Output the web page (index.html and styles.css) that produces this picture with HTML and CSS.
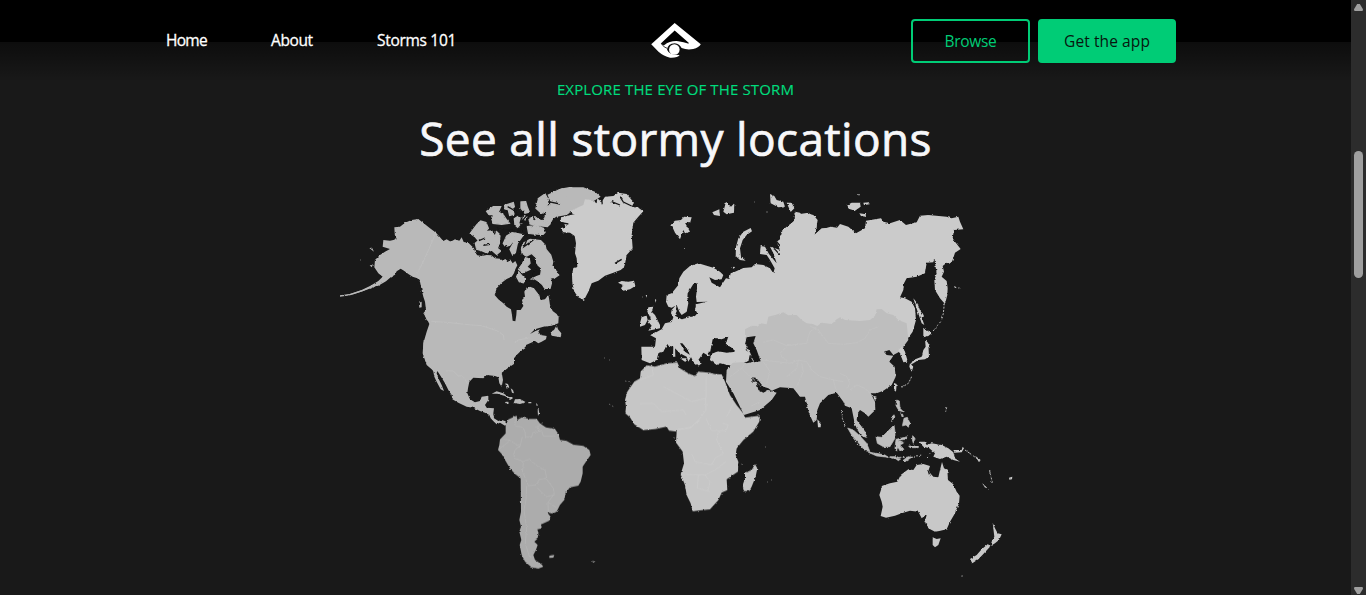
FILE: index.html
```html
<!DOCTYPE html>
<html lang="en">
<head>
<meta charset="utf-8">
<title>Stormy locations</title>
<link rel="stylesheet" href="styles.css">
</head>
<body>
<div class="page">
<header class="header">
  <nav class="nav"><a class="home">Home</a><a class="about">About</a><a class="storms">Storms 101</a></nav>
  <svg class="logo" viewBox="60 34 156 112" aria-label="Logo">
    <path fill="#fff" fill-rule="evenodd" d="M134 37L213 101Q208 110 190 116Q172 120 155 113Q149 100 134 98Q113 98 111 118Q116 134 149 134Q143 143 120 142Q101 138 85 124L63 101ZM134 60L92 99Q98 105 102 104Q120 90 145 92Q162 94 174 99L178 98Z"/>
    <path fill="none" stroke="#0c0c0c" stroke-width="2.5" d="M94 100Q102 112 112 114"/>
    <circle cx="133" cy="117" r="16" fill="#fff"/>
  </svg>
  <div class="actions"><a class="btn browse"><span>Browse</span></a><a class="btn app"><span>Get the app</span></a></div>
</header>
<main class="section">
  <p class="eyebrow"><span>EXPLORE THE EYE OF THE STORM</span></p>
  <h1 class="title"><span>See all stormy locations</span></h1>
  <svg class="map" viewBox="325 180 701 404" role="img" aria-label="World map">
    <defs><filter id="coast" x="0" y="0" width="100%" height="100%"><feTurbulence type="fractalNoise" baseFrequency=".32" numOctaves="2" seed="4"/><feDisplacementMap in="SourceGraphic" scale="2.4" xChannelSelector="R" yChannelSelector="G"/></filter></defs>
    <g filter="url(#coast)">
    <!-- North America -->
    <g class="north" transform="translate(330 180) scale(.33333)">
      <path d="M265 117L275 125 285 133 300 145 318 158 330 172 340 183 350 178 362 185 375 178 388 182 395 172 402 188 412 185 425 198 432 205 436 218 442 226 455 228 470 225 484 226 495 235 510 236 520 243 525 236 535 245 540 238 548 250 556 243 562 256 556 268 552 280 545 290 530 297 515 308 500 325 494 345 505 358 520 370 530 380 543 388 546 405 548 422 556 424 559 405 560 390 572 390 580 378 576 360 585 350 583 335 590 322 600 320 612 325 620 335 628 345 632 360 645 358 655 345 657 355 660 375 668 393 680 402 686 412 685 430 665 437 640 440 615 448 600 462 615 454 630 448 625 455 632 465 650 468 648 478 635 485 625 490 615 483 600 490 588 495 586 505 570 515 560 525 552 535 552 552 535 563 515 578 500 582 310 572 290 555 278 520 280 490 290 455 298 432 290 415 280 400 288 390 285 365 280 350 275 330 270 305 262 295 248 290 235 282 222 272 212 266 200 274 195 284 182 292 168 304 145 317 130 322 100 333 70 343 35 348 60 342 95 330 120 318 145 303 158 290 145 280 133 262 135 240 150 225 165 215 180 207 158 200 160 180 180 182 200 178 194 160 193 142 210 140 225 128 245 120Z"/>
      <path class="aleutians" d="M30 348L60 344 95 333 125 320"/>
      <!-- Arctic islands and Newfoundland -->
      <path class="arctic" d="M421 160L440 135 452 123 468 128 475 145 465 155 485 153 495 170 500 155 510 165 508 190 502 205 512 213 500 223 485 210 470 218 455 212 440 208 436 190 445 182 435 170ZM470 94L490 80 512 80 505 96 520 105 530 120 538 130 515 133 490 130 485 115 492 104 477 104ZM524 76L550 68 553 80 540 90 525 87ZM573 66L587 65 592 82 598 96 585 100 573 85ZM535 90L548 88 552 103 539 106ZM553 115L562 108 572 115 573 130 563 142 555 135ZM580 106L590 110 588 120 579 118ZM530 168L546 158 558 160 550 182 540 195 527 200 520 190ZM560 160L580 165 562 190 556 218 548 225 540 208 550 190ZM592 140L615 137 640 145 645 157 635 167 610 163 596 160ZM597 116L615 110 627 120 645 125 660 132 652 140 620 136 600 132ZM618 85L626 55 645 42 655 60 648 90 635 100ZM655 45L690 28 725 22 720 90 690 100 668 115 660 130 640 120 650 105 645 90 665 68ZM572 205L580 190 600 178 632 182 645 195 648 208 662 225 668 245 665 260 680 275 686 285 672 295 662 290 664 310 660 325 645 325 635 312 620 300 605 297 620 290 632 285 635 265 620 252 620 235 605 220 590 228 577 222ZM560 290L566 276 578 290 586 298 580 308 568 305ZM575 255L587 233 598 238 600 250 590 260 600 268 578 278 566 268Z"/>
      <path d="M665 467L662 455 672 450 680 435 684 448 694 460 692 472ZM118 204L126 203 132 215ZM119 256L128 255 125 262ZM267 368L275 365 275 382 268 383ZM284 405L300 415 304 430 290 420Z"/>
      <path d="M720 22L760 22 795 35 812 50 785 67 760 80 735 88 710 105 680 110 700 70Z"/>
      <path class="water" d="M533 80L560 95 552 112 580 95 570 130 592 105M500 145L530 148 560 150 595 165 645 168M530 195L515 215M578 185L570 205 572 225M447 182L465 174M460 196L480 193M600 95L615 120M655 65L690 72M590 180L582 200 610 180M608 297L620 305 635 318 640 335M597 300L603 315 590 325M600 230L620 255 605 285"/>
      <path class="border" d="M318 158L300 200 275 255 260 282M304 424L350 427 425 435 455 437 500 452 520 465 524 492 540 494 565 480 598 474"/>
    </g>
    <g transform="translate(420 340) scale(.33333)">
      <path class="north" d="M11 0H285L275 72 245 97 249 120 245 140 238 130 235 112 225 108 200 105 190 115 160 113 148 125 144 145 142 160 150 178 165 187 180 183 185 170 205 167 205 180 195 195 200 203 222 205 220 220 222 235 235 243 245 240 255 243 263 250 255 257 240 248 230 253 222 245 212 235 208 225 195 218 180 213 160 203 140 200 115 188 97 178 95 165 85 150 75 130 60 105 52 93 50 100 55 115 65 135 72 153 62 148 50 125 43 110 40 95 32 75 18 65 10 40 10 20ZM215 161L230 154 250 160 265 170 279 175 270 180 255 168 232 161ZM285 178L300 177 318 187 300 192 281 189ZM255 186L265 185 266 190 257 190ZM325 186L334 186 334 190 325 190ZM256 130L264 132 268 142 260 146ZM272 145L279 150 282 160 276 158ZM348 188L354 196 350 198ZM355 203L358 220 354 228 353 212Z"/>
      <path class="border" d="M78 93H100L115 108 128 108 143 132"/>
      <path class="south" d="M265 238L290 227 292 240 305 232 330 237 350 237 360 250 378 262 405 267 415 282 420 300 440 303 460 314 490 318 508 330 512 345 500 362 488 380 488 400 482 425 475 437 450 442 437 458 433 480 420 495 410 515 400 520 382 518 392 530 388 542 370 550 363 553 365 565 352 568 356 580 352 597 343 605 353 615 347 632 340 645 345 660 365 673 370 680 355 686 335 682 315 665 305 645 299 615 304 600 298 575 303 560 298 540 303 515 302 415 285 402 270 385 255 360 245 342 234 330 238 315 240 298 257 280 257 255ZM388 647L403 645 400 653 388 654ZM517 662L524 666 519 668Z"/>
      <path class="border south-border" d="M290 235Q278 255 290 259Q318 257 316 290L335 291 338 278 365 272 370 288 407 288M365 250L350 260 358 275M307 290L300 320 268 300 250 298M270 302L240 325M300 320Q278 324 283 355L305 362 310 370 307 400M308 365L328 358 355 380 375 390 380 415 358 418 348 435 325 437 310 400M320 437L318 480 312 510 320 565 316 610 330 655M378 415L400 445 403 465 378 470 352 443M400 465L384 487 385 515M385 487L410 503"/>
    </g>
    <!-- Greenland and Iceland -->
    <g class="pale" transform="translate(460 180) scale(.33333)">
      <path d="M303 112L320 108 345 102 330 94 350 84 370 75 375 58 395 60 410 70 412 55 425 66 435 50 460 48 475 38 500 42 522 68 515 80 535 83 550 94 535 110 520 128 515 165 518 205 500 225 495 252 490 267 460 278 435 287 415 302 395 310 385 335 372 360 355 352 343 335 337 310 336 285 340 264 352 260 350 235 345 220 348 190 344 168 330 158 310 157 302 145 316 140 312 128 302 125Z"/>
      <path d="M474 308L485 303 505 305 522 302 526 318 510 328 490 332 483 325 490 316Z"/>
      <path class="water" d="M303 128L325 132M424 52L427 73M480 50L490 66 515 78M455 65L480 75M465 250L485 238M341 240L350 252"/>
    </g>
    <!-- Europe, Russia -->
    <g class="pale" transform="translate(620 180) scale(.33333)">
      <path d="M105 500L108 475 90 465 103 460 125 448 135 430 155 425 160 412 153 400 155 390 168 375 170 393 165 407 185 418 208 412 225 408 232 400 225 388 228 373 260 365 230 366 228 350 233 310 220 312 203 340 202 355 205 370 200 395 185 405 178 395 170 375 155 383 145 380 138 365 140 345 155 340 175 315 178 295 190 275 210 258 235 250 255 256 280 263 300 275 310 285 305 298 285 300 268 292 275 308 300 322 318 295 328 297 332 280 345 275 370 264 395 262 405 252 430 255 450 265 460 280 464 265 450 240 440 225 420 222 422 198 435 200 447 222 470 250 460 220 450 200 465 205 480 210 470 185 490 170 482 155 500 140 520 125 530 110 525 95 540 98 550 110 560 100 580 105 593 120 588 150 583 165 600 150 632 140 661 145V450L600 460 560 450 530 440 490 440 445 450 395 455 375 452 395 475 350 560 300 550 290 555 270 540 275 522 293 514 320 515 345 515 330 500 315 495 325 470 305 478 285 475 275 500 278 515 265 515 270 530 250 518 235 540 245 550 235 558 220 545 200 505 187 490 180 490 195 515 215 528 205 545 200 530 180 520 160 500 140 496 130 515 115 520 110 540 90 550 65 540 64 500Z"/>
      <path d="M85 382L100 380 95 395 105 405 120 435 120 445 85 452 95 437 85 425 92 415 82 395ZM60 430L65 410 80 407 83 420 75 435 60 440ZM153 132L165 122 183 120 192 110 215 112 210 130 195 128 210 155 195 160 190 150 180 178 165 158ZM277 97L298 88 300 108 282 105ZM310 95L318 65 333 80 343 70 342 98 320 103ZM348 200L355 175 370 155 392 144 396 154 380 165 368 180 360 205 363 230 377 242 360 240 347 228ZM450 42L463 48 470 60 490 65 495 80 475 82 452 70ZM500 68L515 68 523 85 512 96ZM333 262L343 260 345 268ZM160 500L165 500 166 530 159 530ZM180 535L200 535 195 545ZM105 357L109 360 106 368ZM77 345L81 345 80 353ZM192 204L196 204 195 208Z"/>
      <path class="water" d="M470 185L490 210 510 232M462 205L485 230"/>
    </g>
    <g class="pale" transform="translate(780 180) scale(.33333)">
      <path d="M0 168L20 145 45 120 43 95 60 102 85 98 108 115 110 140 103 165 125 145 150 143 170 145 180 132 205 140 228 160 255 145 258 122 285 118 303 115 310 125 330 130 360 120 378 135 410 127 420 107 445 105 500 110 515 115 535 110 540 125 550 148 522 150 518 175 525 185 542 207 525 218 518 240 512 252 500 248 488 258 492 275 485 290 500 303 503 325 502 345 495 372 480 355 465 330 463 300 470 280 465 250 463 232 460 247 440 248 435 280 410 290 380 295 372 310 370 330 360 352 375 355 395 365 405 385 408 420 398 455 385 473 340 470 300 460 280 450 240 450 180 450 150 450 110 450 60 450 0 450Z"/>
      <path d="M202 75L215 68 240 68 242 80 225 92 206 86ZM250 68L268 67 269 73 252 75ZM238 100L258 103 257 110 243 108ZM0 60L12 75 10 84 0 78ZM22 68L43 80 33 94ZM400 355L412 370 420 390 432 410 425 412 433 435 425 430 413 395ZM430 445L455 460 445 468 430 472ZM435 478L445 490 447 530 435 538 415 540 400 550 390 555 400 540 425 530 430 510 437 500ZM390 550L400 560 395 575 388 560ZM522 318L530 322 525 325ZM535 322L542 325 536 326ZM234 43L240 43 237 47Z"/>
      <path class="islands" d="M493 370L490 400 485 420M482 425L472 437 458 455"/>
    </g>
    <!-- Africa -->
    <g class="africa" transform="translate(600 340) scale(.33333)">
      <path d="M140 76L165 80 200 70 232 67 240 85 265 100 285 108 295 95 325 98 345 102 365 103 375 125 390 165 410 195 430 220 435 233 480 227 478 245 460 275 430 300 410 325 407 345 415 365 414 395 380 418 382 450 365 458 355 480 330 508 300 511 278 514 272 490 260 465 255 435 242 403 252 370 248 335 228 308 230 275 207 272 200 260 165 267 130 270 103 253 90 232 76 220 78 200 75 180 82 155 103 125 120 115 122 95ZM465 372L472 385 467 410 455 440 448 453 432 453 428 435 435 415 435 398 455 390Z"/>
      <path class="border" d="M155 75L160 105 120 120M190 140L275 185 318 175 318 110M317 175L318 210 300 235 270 265 230 267M318 235L335 272 378 272 385 255 368 250M380 230L400 190M120 190H160L185 215 250 210 258 225M235 270L275 260 300 240M275 340L285 365 335 375 345 355 370 340 350 300 355 275M245 403L315 405 345 390 378 365M315 405L330 425 325 450M295 405L292 445 330 455"/>
    </g>
    <!-- Asia -->
    <g class="asia" transform="translate(620 180) scale(.33333)">
      <path d="M375 448L395 437 410 438 422 430 440 433 445 410 468 404 490 397 505 406 530 405 545 420 560 430 578 432 592 438 605 428 635 432 650 418 661 412 675 420 720 423 750 420 765 407 770 388 785 387 800 400 820 405 835 420 860 430 865 480 850 500 857 530 862 545 850 547 838 515 820 525 808 510 792 515 800 525 820 527 808 545 824 560 827 590 815 615 790 632 770 640 752 640 765 665 766 690 745 710 735 700 720 690 713 700 710 720 728 745 741 768 733 770 705 735 695 685 675 677 670 665 650 638 625 645 600 670 592 690 590 720 580 728 567 700 555 650 540 650 520 625 480 622 455 632 445 625 430 620 412 598 400 595 410 610 415 630 430 638 445 630 470 638 455 660 420 690 372 705 360 680 340 640 318 605 320 570 340 545 370 545 380 550 400 545 380 510 375 485Z"/>
      <path class="pale" d="M270 540L275 522 300 515 345 515 370 505 390 520 385 545 340 548 325 555 300 548Z"/>
      <path class="water-fill" d="M380 472L407 468 400 490 410 510 422 544 402 547 390 517 375 490ZM397 592L407 593 408 605 397 605ZM270 518L278 478 292 475 303 484 322 478 316 494 333 502 348 515 320 518 295 514Z"/>
      <path class="border" d="M570 438L595 450 625 490 670 493 710 488 735 475 750 450 775 440M590 440L570 455 565 470 560 490 500 497 460 480 430 487M425 540L470 545 510 550 535 540 560 545 575 570 600 590 640 600 670 605M430 545L450 575 440 610M500 500L480 520 500 545M535 540L530 565 500 590M545 550L550 575 530 620M640 600L648 630M660 580L680 590 690 610 680 625M690 630L710 615 735 625 765 655M330 590L365 565 375 550M365 565L390 590 425 620M390 680L420 665"/>
      <path class="pale" d="M845 500L855 515 862 540 852 545 835 510ZM822 609L830 612 828 635 822 630ZM760 647L770 650 765 663ZM592 718L603 730 602 742 594 742Z"/>
    </g>
    <!-- Oceania -->
    <g class="oceania" transform="translate(780 340) scale(.33333)">
      <path d="M302 528L308 500 305 485 298 465 307 437 330 430 352 425 362 405 385 388 400 390 410 375 430 372 450 378 445 393 460 410 475 412 480 390 486 366 492 385 502 390 504 420 520 433 530 455 539 467 537 490 525 520 510 545 500 568 478 573 465 575 445 565 440 550 432 545 438 525 425 535 415 515 390 512 365 520 345 527 318 533ZM458 592L470 597 482 595 475 615 465 622 458 615ZM638 548L645 565 653 580 665 583 657 600 645 610 632 618 635 605 643 590ZM624 612L630 620 610 642 595 658 577 670 570 657 590 645 605 628Z"/>
      <path class="asia isles" d="M203 264L220 270 240 288 260 310 270 335 255 332 235 308 215 285ZM223 240L235 250 255 275 258 292 245 287 232 268ZM265 337L290 340 315 345 325 352 290 348ZM330 350L350 350 360 354 335 355ZM288 290L305 292 325 272 342 255 345 275 345 295 330 320 310 320 292 310ZM350 180L358 183 360 205 370 215 357 212 348 197ZM372 235L382 232 390 250 385 262 378 255 367 258ZM340 225L345 228 335 245ZM362 218L370 225 366 230ZM348 298L382 290 375 298 353 302 370 310 360 315 372 328 360 333 352 318 350 335 345 325ZM398 287L405 295 400 310 397 300ZM345 355L362 357 355 362ZM370 360L385 350 395 352 375 365ZM386 318L415 318 415 323 390 323Z"/>
      <path d="M418 305L435 305 440 315 455 310 485 315 505 325 520 337 525 355 540 365 520 360 500 350 480 357 460 350 465 340 448 325 430 320ZM520 330L545 330 548 320 552 325 545 337 525 338ZM560 332L578 345 572 343ZM585 347L602 360 597 367ZM610 433L622 445 614 442ZM628 395L634 412 630 402ZM687 413L697 410 696 418 688 419ZM545 706L548 708 545 711Z"/>
      <path class="islands" d="M187 213V235L195 258M215 285L235 318M270 338L325 352 390 352 425 345M395 110L385 130 365 142M500 202L497 215M450 340L440 353M555 330L600 362M629 393L637 428M608 432L625 448"/>
      <path class="water" d="M438 525L432 545M445 393L450 408"/>
    </g>
    <g class="dots"><path d="M604 358h1M609 360h1M625 381l6 1M609 404l5 3M642 297h1M674 438h1M738 463l6 2M767 482h1M771 480h1M360 261h1M765 447h1M754 202h1M766 212h1M962 576h1"/></g>
    </g>
  </svg>
</main>
</div>
<aside class="scrollbar"><i class="arrow up"></i><i class="thumb"></i><i class="arrow down"></i></aside>
</body>
</html>
```

FILE: styles.css
```css
* { box-sizing: border-box; }
body { margin: 0; width: 1366px; height: 595px; overflow: hidden; display: flex; background: #000; color: #fff; font-family: "Trebuchet MS", "Open Sans", sans-serif; }
.page { position: relative; width: 1351px; padding-top: 42px; }
.header { position: absolute; z-index: 1; top: 0; left: 0; width: 1351px; height: 82px; padding: 0 175px 0 166px; display: grid; grid-template-columns: 485px 50px 1fr; background: linear-gradient(#000, transparent); }
.nav { display: flex; gap: 64px; padding-top: 28px; font-size: 15.5px; line-height: 24px; white-space: nowrap; -webkit-text-stroke: .3px #fff; }
.home { width: 41px; letter-spacing: -.7px; }
.about { width: 42px; letter-spacing: -.4px; }
.storms { letter-spacing: -.3px; }
.logo { width: 52px; height: 37px; margin: 22px 0 0 -1px; }
.actions { display: flex; justify-content: flex-end; gap: 8px; padding-top: 19px; }
.btn { display: flex; align-items: center; justify-content: center; height: 44px; border: 2px solid #00cc76; border-radius: 4px; font-size: 15.5px; white-space: nowrap; }
.browse { width: 119px; color: #00cc76; letter-spacing: -.3px; }
.app { width: 138px; background: #00cc76; color: #07170f; letter-spacing: .1px; }
.section { height: 553px; padding-top: 35px; background: #191919; display: flex; flex-direction: column; align-items: center; }
.eyebrow { margin: 0; height: 24px; line-height: 24px; font-size: 15px; letter-spacing: .14px; color: #00dc7d; white-space: nowrap; -webkit-text-stroke: .15px #00dc7d; }
.title { margin: 9px 0 0; height: 56px; line-height: 56px; font-weight: 400; font-size: 46px; letter-spacing: .33px; color: #f7f7f9; white-space: nowrap; -webkit-text-stroke: .7px #f7f7f9; }
.map { display: block; width: 701px; height: 404px; margin-top: 14px; flex: none; }
.north { fill: #b9b9b9; }
.arctic { stroke: #b9b9b9; stroke-width: 4; }
.aleutians { fill: none; stroke: #b9b9b9; stroke-width: 4; }
.south { fill: #acacac; }
.pale { fill: #cbcbcb; }
.africa { fill: #c6c6c6; }
.asia { fill: #bebebe; }
.isles { stroke: #bebebe; stroke-width: 2; }
.oceania { fill: #c8c8c8; }
.water { fill: none; stroke: #191919; stroke-width: 4; }
.water-fill { fill: #191919; }
.border { fill: none; stroke: #c7c7c7; stroke-width: 2; opacity: .65; }
.africa .border { stroke: #d2d2d2; }
.south-border { stroke: #bdbdbd; }
.islands { fill: none; stroke: #b8b8b8; stroke-width: 3; stroke-dasharray: 6 4; }
.dots { fill: none; stroke: #666; stroke-width: 1; stroke-dasharray: 1.5 2; }
.scrollbar { width: 15px; height: 595px; background: #2c2c2c; display: flex; flex-direction: column; align-items: center; padding: 4px 0 1px; }
.arrow { width: 9px; height: 7px; background: #a0a0a0; clip-path: polygon(35% 0, 65% 0, 100% 75%, 95% 100%, 5% 100%, 0 75%); }
.down { transform: rotate(180deg); margin-top: auto; }
.thumb { width: 9px; height: 127px; margin-top: 140px; border-radius: 5px; background: #9f9f9f; }
```
